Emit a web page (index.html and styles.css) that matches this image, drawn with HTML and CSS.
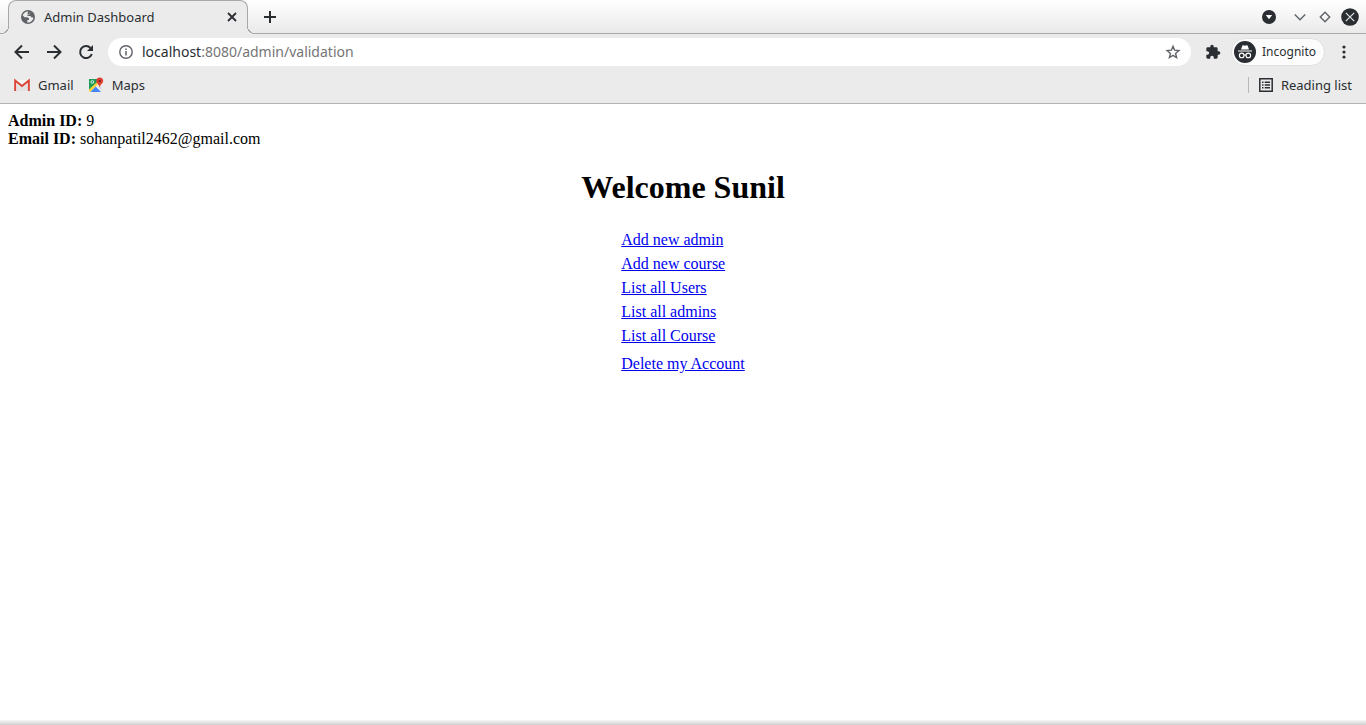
FILE: index.html
```html
<!DOCTYPE html>
<html lang="en">
<head>
<meta charset="utf-8">
<title>Admin Dashboard</title>
<link rel="stylesheet" href="styles.css">
</head>
<body>
<header class="browser">
  <div class="tabstrip">
    <div class="tab">
      <svg class="icon" width="14" height="14" viewBox="0 0 14 14"><circle cx="7" cy="7" r="7" fill="#5f6368"/><path d="M6 1.500C4 2 2.200 3.500 1.700 5.300L3.500 7.200H6.500L8 8.500V10H6.300V12.500C9.500 12.800 12.300 10.500 12.400 7.500H10.500L9.500 6H6.500V4.500H8.500L9.500 2.200Z" fill="#ebebeb"/><path d="M7 2h2.500l-1 2H6.500z" fill="#5f6368"/></svg>
      <span class="tab-title">Admin Dashboard</span>
      <button class="plain" aria-label="Close tab"><svg width="10" height="10" viewBox="0 0 10 10"><path d="M1 1l8 8M9 1l-8 8" stroke="#2a2e32" stroke-width="1.800"/></svg></button>
    </div>
    <button class="plain new-tab" aria-label="New tab"><svg width="12" height="12" viewBox="0 0 12 12"><path d="M6 0v12M0 6h12" stroke="#2a2e32" stroke-width="2"/></svg></button>
    <div class="window-buttons">
      <button class="plain search-tabs" aria-label="Search tabs"><svg width="14" height="14" viewBox="0 0 14 14"><circle cx="7" cy="7" r="7" fill="#2a2e32"/><path d="M3.800 5h6.400L7 9.300z" fill="#fff"/></svg></button>
      <button class="plain" aria-label="Minimize"><svg width="12" height="12" viewBox="0 0 12 12"><path d="M.8 3.500L6 8.700l5.200-5.200" fill="none" stroke="#5f6368" stroke-width="1.400"/></svg></button>
      <button class="plain" aria-label="Maximize"><svg width="12" height="12" viewBox="0 0 12 12"><path d="M6 1.300L10.700 6 6 10.700 1.300 6z" fill="none" stroke="#5f6368" stroke-width="1.400"/></svg></button>
      <button class="plain" aria-label="Close window"><svg width="18" height="18" viewBox="0 0 18 18"><circle cx="9" cy="9" r="8.800" fill="#2a2e32"/><path d="M4.800 4.800l8.400 8.400M13.200 4.800l-8.400 8.400" stroke="#e4e4e4" stroke-width="1.200"/></svg></button>
    </div>
  </div>
  <div class="toolbar">
    <button class="plain" aria-label="Back"><svg width="16" height="16" viewBox="0 0 16 16"><path d="M15 8H2M8 1.500L1.500 8 8 14.500" fill="none" stroke="#2a2e32" stroke-width="2"/></svg></button>
    <button class="plain" aria-label="Forward"><svg width="16" height="16" viewBox="0 0 16 16"><path d="M1 8h13M8 1.500L14.500 8 8 14.500" fill="none" stroke="#2a2e32" stroke-width="2"/></svg></button>
    <button class="plain" aria-label="Reload"><svg width="16" height="16" viewBox="0 0 16 16"><path d="M13.800 10A6 6 0 1 1 12.500 4" fill="none" stroke="#2a2e32" stroke-width="2"/><path d="M15 1v6H9z" fill="#2a2e32"/></svg></button>
    <div class="omnibox">
      <button class="plain" aria-label="Site information"><svg width="14" height="14" viewBox="0 0 14 14"><circle cx="7" cy="7" r="6.200" fill="none" stroke="#5f6368" stroke-width="1.400"/><path d="M7 6v4.500M7 3.400v1.500" stroke="#5f6368" stroke-width="1.500"/></svg></button>
      <div class="url" role="textbox" tabindex="0" aria-label="Address"><span class="host">localhost</span>:8080/admin/validation</div>
      <button class="plain" aria-label="Bookmark this page"><svg width="16" height="16" viewBox="0 0 16 16"><path d="M8 2.300l1.600 3.900 4.300.4-3.300 2.800 1 4.200L8 11.400l-3.600 2.200 1-4.200-3.300-2.800 4.300-.4z" fill="none" stroke="#5f6368" stroke-width="1.400"/></svg></button>
    </div>
    <button class="plain extensions" aria-label="Extensions"><svg width="16" height="16" viewBox="0 0 24 24"><path d="M20.500 11H19V7c0-1.100-.9-2-2-2h-4V3.500a2.500 2.500 0 0 0-5 0V5H4c-1.100 0-2 .9-2 2v3.800h1.500a2.700 2.700 0 0 1 0 5.400H2V20c0 1.100.9 2 2 2h3.800v-1.500a2.700 2.700 0 0 1 5.400 0V22H17c1.100 0 2-.9 2-2v-4h1.500a2.500 2.500 0 0 0 0-5z" fill="#2a2e32"/></svg></button>
    <button class="plain profile"><svg width="22" height="22" viewBox="0 0 22 22"><circle cx="11" cy="11" r="11" fill="#2a2e32"/><path d="M7 8.500L8.300 4.700Q8.600 4 9.300 4.300L11 4.700l1.700-.4q.7-.3 1 .4L15 8.500zM4 9.500h14v1H4z" fill="#fff"/><g fill="none" stroke="#fff" stroke-width="1.100"><circle cx="7.700" cy="14.400" r="2.300"/><circle cx="14.300" cy="14.400" r="2.300"/><path d="M10 14.200q1-.7 2 0"/></g></svg><span>Incognito</span></button>
    <button class="plain menu" aria-label="Menu"><svg width="4" height="14" viewBox="0 0 4 14"><g fill="#2a2e32"><circle cx="2" cy="2" r="1.600"/><circle cx="2" cy="7" r="1.600"/><circle cx="2" cy="12" r="1.600"/></g></svg></button>
  </div>
  <nav class="bookmarks">
    <a class="bookmark" href="#"><svg width="16" height="16" viewBox="0 0 16 16"><path d="M1 3h14v11H1z" fill="#f5f5f5"/><path d="M3 5l5 4 5-4v9H3z" fill="#e3e3e3"/><path d="M1.200 14V3.500L8 9l6.800-5.500V14" fill="none" stroke="#db4437" stroke-width="2"/></svg><span>Gmail</span></a>
    <a class="bookmark" href="#"><svg width="16" height="16" viewBox="0 0 16 16"><path d="M1 2h12v12.500H1z" fill="#f2f2f2"/><path d="M1 2h9l-1 4-8 8z" fill="#1e9b57"/><path d="M1 12.500L8.500 5.500 10 7.200 2.500 14.800H1z" fill="#ffd43b"/><path d="M2.500 15l5.200-5.500L13 15z" fill="#4285f4"/><path d="M9 8.500l4.200 5V8.500z" fill="#d5d5d5"/><circle cx="4.300" cy="5" r="1.400" fill="none" stroke="#fff" stroke-width=".8"/><path d="M11.700.5a3.500 3.500 0 0 1 3.500 3.500c0 2.500-2.700 3-3.500 6-.8-3-3.500-3.500-3.500-6A3.500 3.500 0 0 1 11.700.5z" fill="#e04335"/><circle cx="11.700" cy="4" r="1.200" fill="#7d231c"/></svg><span>Maps</span></a>
    <button class="plain reading"><svg width="14" height="14" viewBox="0 0 14 14"><path d="M.8.8h12.400v12.400H.8z" fill="none" stroke="#2a2e32" stroke-width="1.500"/><path d="M3 4.200h1.500M5.700 4.200H11M3 7h1.500M5.700 7H11M3 9.800h1.500M5.700 9.800H11" stroke="#2a2e32" stroke-width="1.400"/></svg><span>Reading list</span></button>
  </nav>
</header>
<main class="page">
  <div><b>Admin ID:</b> 9</div>
  <div><b>Email ID:</b> sohanpatil2462@gmail.com</div>
  <h1 class="welcome">Welcome Sunil</h1>
  <nav class="links">
    <a href="#">Add new admin</a>
    <a href="#">Add new course</a>
    <a href="#">List all Users</a>
    <a href="#">List all admins</a>
    <a href="#">List all Course</a>
    <a class="delete" href="#">Delete my Account</a>
  </nav>
</main>
<div class="bottom-shadow"></div>
</body>
</html>
```
FILE: styles.css
```css
* { box-sizing: border-box; }

body {
  margin: 0;
  min-height: 100vh;
  display: flex;
  flex-direction: column;
  background: #fff;
  color: #000;
  font: 16px/18px "Liberation Serif", "Times New Roman", serif;
}

svg { display: block; flex: none; }

.plain {
  display: flex;
  align-items: center;
  padding: 0;
  border: 0;
  background: none;
  color: inherit;
  font: inherit;
}

.browser {
  background: #ebebeb;
  border-bottom: 1px solid #b4b4b4;
  color: #2a2e32;
  font: 13px/18px "Noto Sans", sans-serif;
}

.tabstrip {
  display: flex;
  align-items: center;
  height: 34px;
  padding: 0 7px 0 8px;
  background: linear-gradient(#fff, #e9e9e9);
  box-shadow: inset 0 -1px #a8a8a8;
}

.tab {
  position: relative;
  display: flex;
  align-items: center;
  gap: 9px;
  width: 240px;
  height: 34px;
  padding: 0 10px 1px 12px;
  background: #ebebeb;
  border: 1px solid #a8a8a8;
  border-bottom: 0;
  border-radius: 8px 8px 0 0;
}

.tab::before,
.tab::after {
  content: "";
  position: absolute;
  bottom: 0;
  width: 8px;
  height: 8px;
}

.tab::before {
  left: -8px;
  background: radial-gradient(circle at 0 0, #ececec 7px, #a8a8a8 7px, #a8a8a8 8px, #ebebeb 8px);
}

.tab::after {
  right: -8px;
  background: radial-gradient(circle at 100% 0, #ececec 7px, #a8a8a8 7px, #a8a8a8 8px, #ebebeb 8px);
}

.tab-title { flex: 1; }
.new-tab { margin-left: 16px; }

.window-buttons {
  display: flex;
  align-items: center;
  gap: 13px;
  margin-left: auto;
}

.window-buttons .search-tabs { margin-right: 5px; }
.window-buttons .plain:last-child { margin-left: -3px; }

.toolbar {
  display: flex;
  align-items: center;
  gap: 16px;
  height: 36px;
  padding: 0 20px 0 14px;
}

.omnibox {
  display: flex;
  align-items: center;
  flex: 1;
  gap: 9px;
  height: 28px;
  margin-left: -2px;
  padding: 0 10px 0 11px;
  border-radius: 14px;
  background: #fff;
  font-size: 14px;
}

.url { flex: 1; color: #757575; }
.host { color: #2a2e32; }
.extensions { margin-left: -2px; }

.profile {
  gap: 6px;
  height: 28px;
  margin-left: -6px;
  padding: 0 8px 0 2px;
  border: 1px solid #e0e0e0;
  border-radius: 14px;
  background: #fcfcfc;
  font-size: 12px;
}

.menu { margin-left: 1px; }

.bookmarks {
  display: flex;
  align-items: center;
  gap: 14px;
  height: 33px;
  padding: 0 14px 4px;
}

.bookmark {
  display: flex;
  align-items: center;
  gap: 8px;
  color: inherit;
  text-decoration: none;
}

.reading {
  gap: 8px;
  margin-left: auto;
  padding-left: 11px;
  background: linear-gradient(#b8b8b8, #b8b8b8) left center / 1px 16px no-repeat;
}

.page { flex: 1; padding: 8px; }

.welcome {
  margin: 21px 0;
  font-size: 32px;
  line-height: 37px;
  text-align: center;
}

.links {
  display: grid;
  gap: 6px;
  width: max-content;
  margin: 0 auto;
  padding-top: 4px;
}

.links a { justify-self: start; color: #00e; text-decoration: underline; }
.links .delete { margin-top: 4px; }

.bottom-shadow {
  height: 5px;
  background: linear-gradient(#f8f8f8, #cecece);
}
```
